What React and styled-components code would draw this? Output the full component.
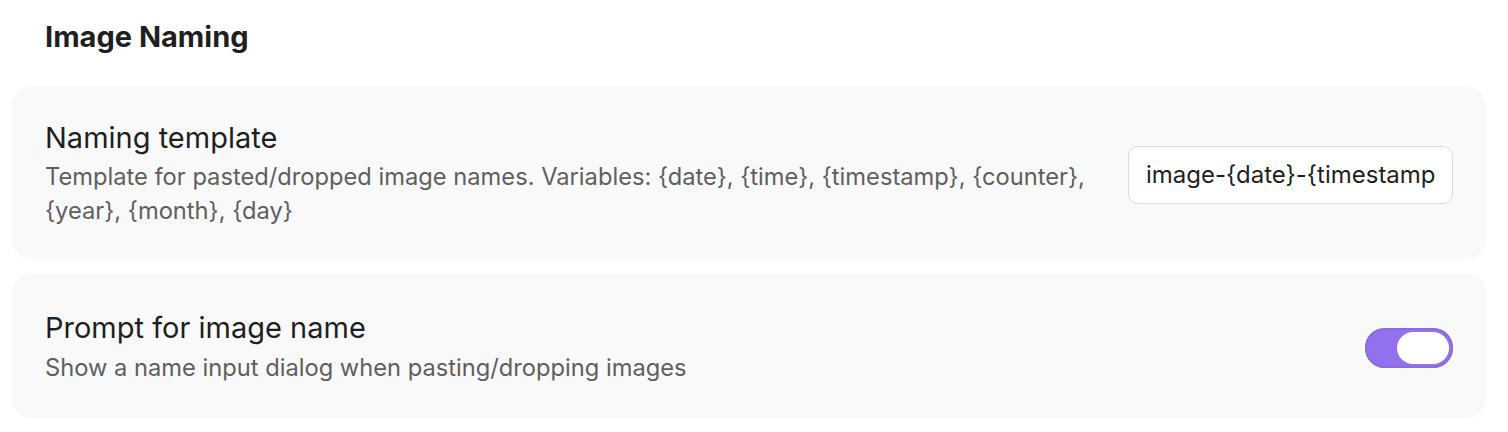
import React, { useState } from 'react';
import styled, { createGlobalStyle } from 'styled-components';

const GlobalStyle = createGlobalStyle`
  body {
    margin: 0;
    background: #ffffff;
    font-family: Inter, "Noto Sans", sans-serif;
    -webkit-font-smoothing: antialiased;
  }
`;

const Page = styled.div`
  padding: 0 22px 0 12px;
`;

const Heading = styled.h2`
  margin: 0;
  padding: 20px 0 33px 33px;
  font-size: 29px;
  font-weight: 700;
  line-height: 34px;
  color: #1f1f1f;
`;

const List = styled.div`
  display: flex;
  flex-direction: column;
  gap: 14px;
`;

const Card = styled.div`
  display: flex;
  align-items: center;
  gap: 28px;
  padding: ${({ $roomy }) => ($roomy ? '38px 33px 33px' : '34px 33px 31px')};
  background: #f9f9f9;
  border-radius: 20px;
  box-shadow: 0 0 2px rgba(0, 0, 0, 0.03);
`;

const Text = styled.div`
  flex: 1;
  display: flex;
  flex-direction: column;
  gap: ${({ $wide }) => ($wide ? '6px' : '5px')};
`;

const Label = styled.div`
  font-size: 29px;
  line-height: 34px;
  color: #1f1f1f;
`;

const Description = styled.div`
  font-size: 23.7px;
  line-height: 34px;
  color: #5f5f5f;
`;

const Input = styled.input`
  width: 325px;
  height: 58px;
  box-sizing: border-box;
  padding: 0 17px;
  border: 1.5px solid #dcdcdc;
  border-radius: 10px;
  background: #ffffff;
  font-family: inherit;
  font-size: 24px;
  color: #1f1f1f;
  outline: none;
`;

const Switch = styled.button`
  width: 88px;
  height: 40px;
  padding: 4px;
  box-sizing: border-box;
  border: none;
  border-radius: 20px;
  background: ${({ $on }) => ($on ? '#9370ee' : '#d4d4d8')};
  box-shadow: inset 0 0 0 1.5px ${({ $on }) => ($on ? '#8a6ad8' : '#c4c4c8')};
  display: flex;
  justify-content: ${({ $on }) => ($on ? 'flex-end' : 'flex-start')};
  cursor: pointer;
`;

const Knob = styled.span`
  width: 52px;
  height: 32px;
  border-radius: 16px;
  background: #ffffff;
`;

export default function App() {
  const [template, setTemplate] = useState('image-{date}-{timestamp}');
  const [prompt, setPrompt] = useState(true);

  return (
    <Page>
      <GlobalStyle />
      <Heading>Image Naming</Heading>
      <List>
        <Card>
          <Text>
            <Label>Naming template</Label>
            <Description>
              Template for pasted/dropped image names. Variables: {'{date}'}, {'{time}'},{' '}
              {'{timestamp}'}, {'{counter}'}, {'{year}'}, {'{month}'}, {'{day}'}
            </Description>
          </Text>
          <Input value={template} onChange={e => setTemplate(e.target.value)} />
        </Card>
        <Card $roomy>
          <Text $wide>
            <Label>Prompt for image name</Label>
            <Description>Show a name input dialog when pasting/dropping images</Description>
          </Text>
          <Switch $on={prompt} onClick={() => setPrompt(!prompt)}>
            <Knob />
          </Switch>
        </Card>
      </List>
    </Page>
  );
}
